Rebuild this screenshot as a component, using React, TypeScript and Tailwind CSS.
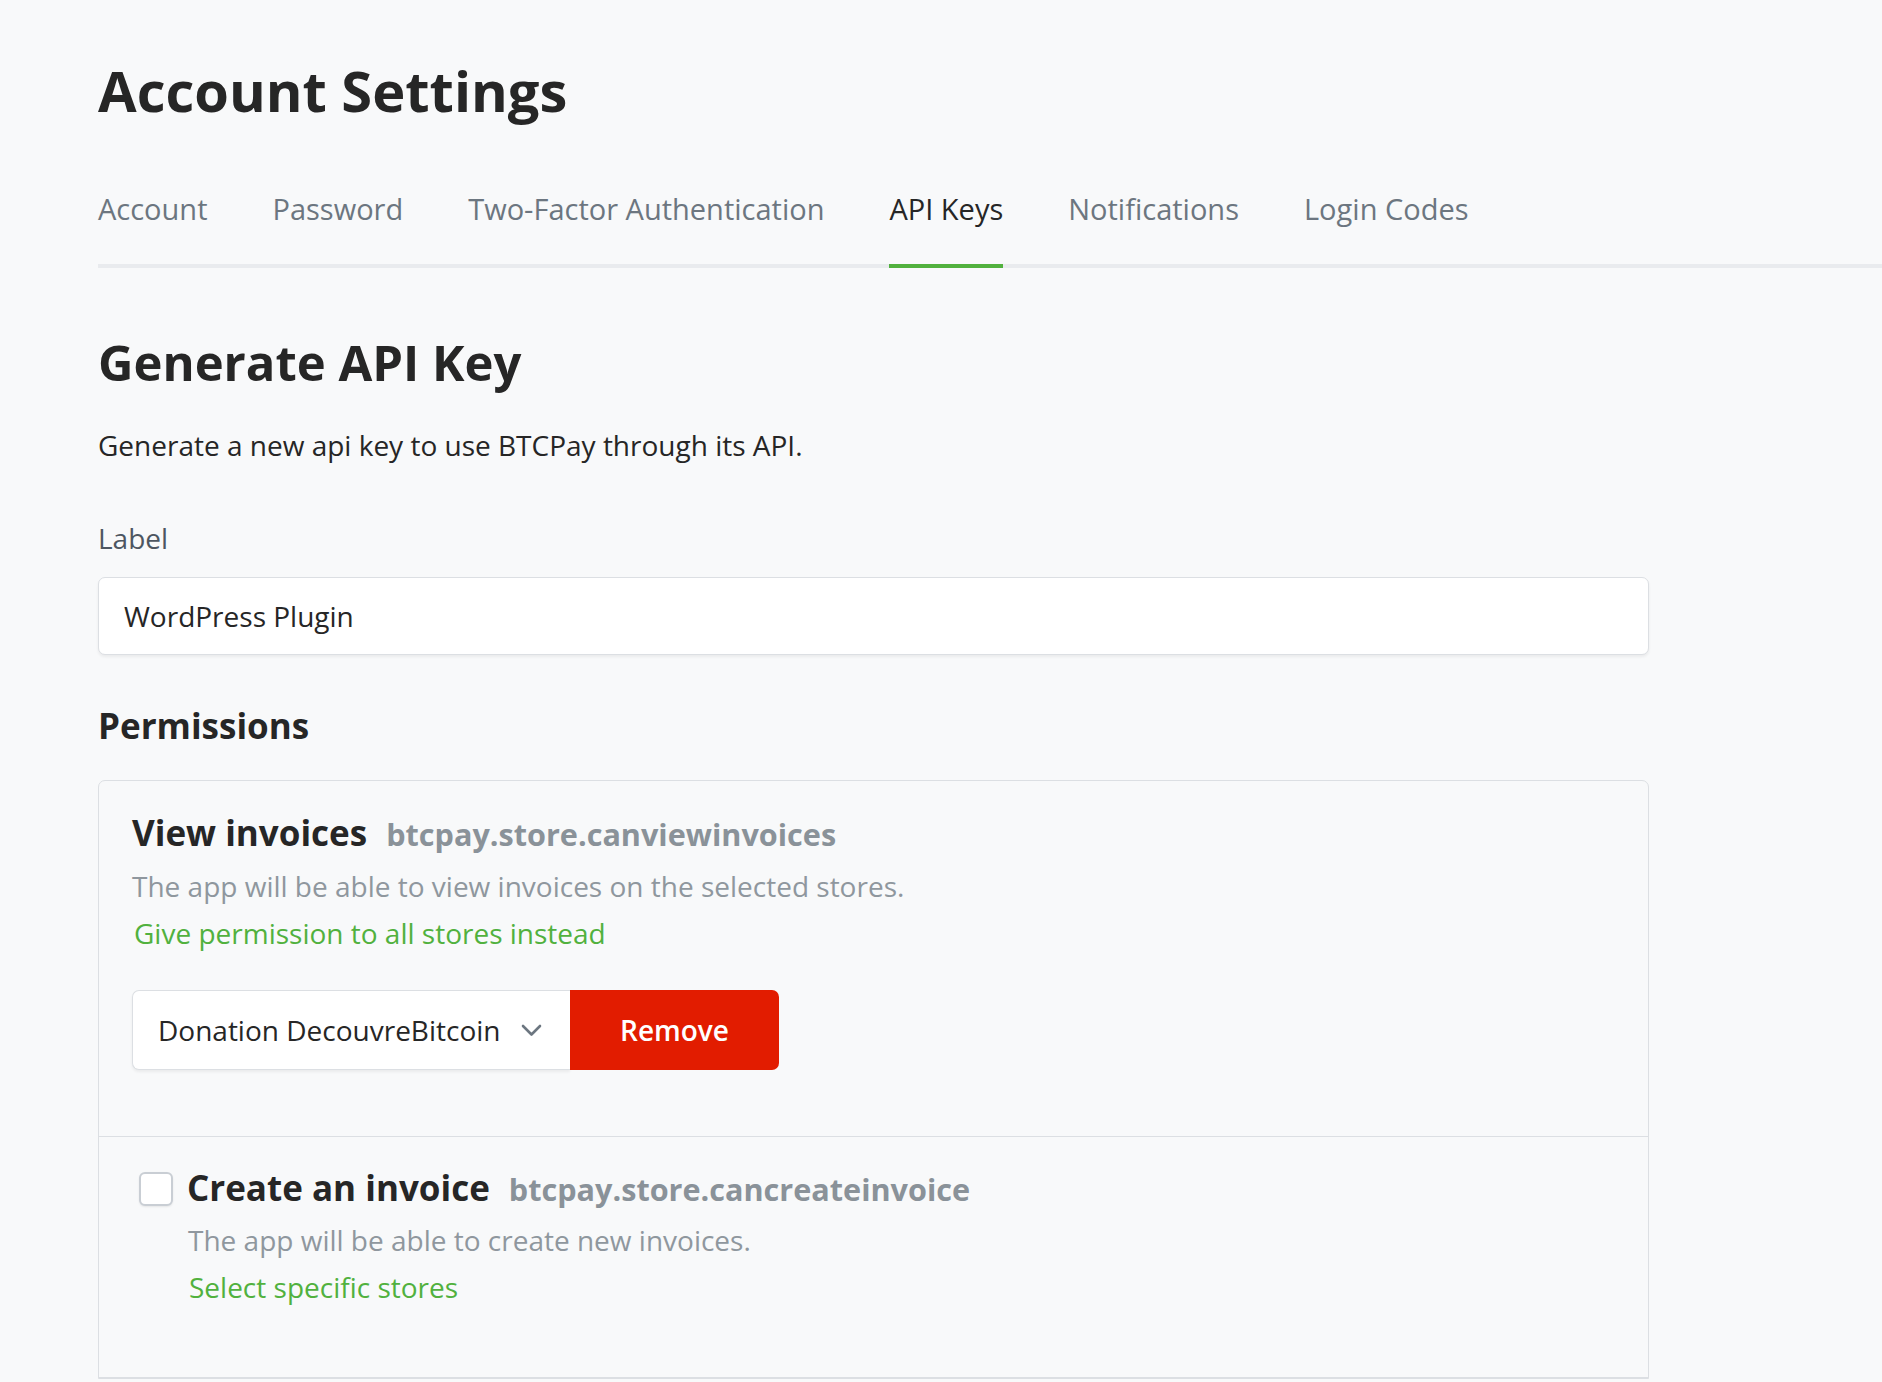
import React from 'react';

const TABS = ['Account', 'Password', 'Two-Factor Authentication', 'API Keys', 'Notifications', 'Login Codes'];

const Chevron: React.FC = () => (
  <svg width="21" height="13" viewBox="0 0 21 13" fill="none" className="shrink-0">
    <path d="M2 2l8.5 8.5L19 2" stroke="#6c7680" strokeWidth="2.6" strokeLinecap="round" strokeLinejoin="round" />
  </svg>
);

export default function App() {
  return (
    <div className="min-h-screen bg-[#f8f9fa] text-[#262626] font-['Open_Sans',sans-serif] pl-[98px] pt-[55px]">
      <h1 className="text-[56px] leading-[70px] font-bold text-[#262626]">Account Settings</h1>

      {/* Tabs */}
      <nav className="mt-[64px] flex border-b-4 border-[#e9ebee]">
        {TABS.map((tab) => {
          const active = tab === 'API Keys';
          return (
            <a
              key={tab}
              className={`mr-[65px] -mb-[4px] pb-[35px] text-[29px] leading-[40px] border-b-4 ${
                active ? 'border-[#51b13e] text-[#262626]' : 'border-transparent text-[#6c7680]'
              }`}
            >
              {tab}
            </a>
          );
        })}
      </nav>

      <div className="max-w-[1551px]">
        <h2 className="mt-[64px] text-[49px] leading-[61px] font-bold">Generate API Key</h2>
        <p className="mt-[32px] text-[28px] leading-[40px] text-[#262626]">
          Generate a new api key to use BTCPay through its API.
        </p>

        <label className="block mt-[53px] text-[28px] leading-[40px] text-[#4d5661]">Label</label>
        <div className="mt-[19px] h-[78px] flex items-center pl-[25px] bg-white border border-[#dcdfe3] rounded-[7px] shadow-[0_2px_3px_rgba(0,0,0,0.06)] text-[28px] text-[#262626]">
          WordPress Plugin
        </div>

        <h3 className="mt-[49px] text-[35px] leading-[44px] font-bold">Permissions</h3>

        {/* Permissions list */}
        <div className="mt-[32px] border border-[#dcdfe3] rounded-t-[7px]">
          <div className="pl-[33px] pt-[30px] pb-[66px] border-b border-[#dcdfe3]">
            <div className="flex items-baseline gap-[19px] leading-[44px]">
              <span className="text-[35px] font-bold text-[#262626]">View invoices</span>
              <span className="text-[30.6px] font-bold text-[#8a9299]">btcpay.store.canviewinvoices</span>
            </div>
            <p className="mt-[7px] text-[28px] leading-[47px] text-[#8f979e]">
              The app will be able to view invoices on the selected stores.
            </p>
            <a className="block pl-[2px] text-[28px] leading-[47px] text-[#51b13e]">Give permission to all stores instead</a>

            <div className="mt-[33px] flex">
              <div className="w-[438px] h-[80px] flex items-center justify-between pl-[25px] pr-[28px] bg-white border border-[#dcdfe3] border-r-0 rounded-l-[7px] shadow-[0_2px_3px_rgba(0,0,0,0.06)] text-[28px] text-[#262626]">
                <span>Donation DecouvreBitcoin</span>
                <Chevron />
              </div>
              <button className="w-[209px] h-[80px] bg-[#e21c00] rounded-r-[7px] text-white text-[28px] font-semibold">
                Remove
              </button>
            </div>
          </div>

          <div className="pl-[40px] pt-[29px] pb-[66px] border-b border-[#dcdfe3]">
            <div className="flex items-center">
              <span className="w-[34px] h-[34px] rounded-[6px] border-2 border-[#c9ced4] bg-white shrink-0 shadow-[0_1px_2px_rgba(0,0,0,0.08)]" />
              <div className="ml-[14px] flex items-baseline gap-[19px] leading-[44px]">
                <span className="text-[35px] font-bold text-[#262626]">Create an invoice</span>
                <span className="text-[30.6px] font-bold text-[#8a9299]">btcpay.store.cancreateinvoice</span>
              </div>
            </div>
            <div className="pl-[49px]">
              <p className="mt-[6px] text-[28px] leading-[47px] text-[#8f979e]">
                The app will be able to create new invoices.
              </p>
              <a className="block pl-[1px] text-[28px] leading-[47px] text-[#51b13e]">Select specific stores</a>
            </div>
          </div>
        </div>
      </div>
    </div>
  );
}
